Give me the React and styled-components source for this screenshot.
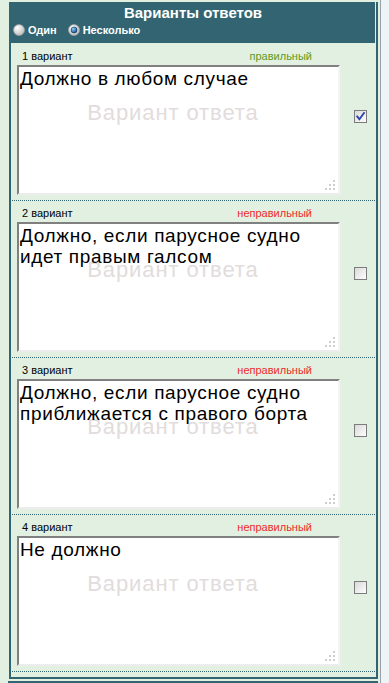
import React from "react";
import styled, { createGlobalStyle } from "styled-components";

const TEAL = "#326571";
const BG = "#e1f0e1";

const Global = createGlobalStyle`
  html, body { margin: 0; padding: 0; }
  body {
    background: #eef3f7;
    font-family: "Liberation Sans", Arial, sans-serif;
  }
`;

const Page = styled.div`
  width: 381px;
  min-height: 683px;
  box-sizing: border-box;
  background: ${BG};
  border-right: 1px solid #9aa1a8;
  padding: 2px 2px 0 9px;
  overflow: hidden;
`;

const Panel = styled.div`
  border: 2px solid ${TEAL};
  border-top: none;
  padding: 0 0 5px;
`;

const Header = styled.div`
  background: ${TEAL};
  margin: 0 1px 0 -2px;
  height: 41px;
  box-sizing: border-box;
  padding: 2px 0 0 4px;
  color: #fff;
`;

const Title = styled.div`
  font: bold 15px/18px "Liberation Sans", Arial, sans-serif;
  text-align: center;
  padding-right: 2px;
`;

const ModeRow = styled.div`
  display: flex;
  align-items: center;
  height: 16px;
`;

const Mode = styled.label`
  display: flex;
  align-items: center;
  gap: 3px;
  font: bold 11px/16px "Liberation Sans", Arial, sans-serif;
  margin-right: 11px;
`;

const Body = styled.div`
  padding-top: 1px;
`;

const Row = styled.div`
  display: flex;
  margin: 0 1px;
  padding: 6px 0 5px 5px;
  border-bottom: 1px dotted ${TEAL};
`;

const Main = styled.div`
  width: 323px;
  display: flex;
  flex-direction: column;
`;

const LabelLine = styled.div`
  display: flex;
  justify-content: space-between;
  font: 11px/13px "Liberation Sans", Arial, sans-serif;
  padding: 0 28px 0 5px;
  margin-bottom: 2px;
`;

const Status = styled.span`
  color: ${(p) => (p.$ok ? "#5f9a1c" : "#ef2b2b")};
`;

const Field = styled.div`
  position: relative;
  height: 130px;
  background: #fff;
`;

const Hint = styled.span`
  position: absolute;
  left: 0;
  right: 11px;
  top: 35px;
  text-align: center;
  font: 22px/25px "Liberation Sans", Arial, sans-serif;
  letter-spacing: 0.9px;
  color: #e2dcdc;
  pointer-events: none;
  white-space: nowrap;
`;

const Area = styled.textarea`
  position: relative;
  display: block;
  width: 100%;
  height: 100%;
  box-sizing: border-box;
  margin: 0;
  padding: 1px 1px;
  border-style: solid;
  border-width: 2px;
  border-color: #808080 #f4f4f4 #ececec #808080;
  background: transparent;
  resize: none;
  outline: none;
  overflow: hidden;
  font: 19px/21px "Liberation Sans", Arial, sans-serif;
  letter-spacing: 0.65px;
  color: #000;
`;

const Grip = styled.svg`
  position: absolute;
  right: 5px;
  bottom: 5px;
  pointer-events: none;
`;

const Side = styled.div`
  flex: 1;
  display: flex;
  align-items: center;
  justify-content: center;
  padding: 0 0 12px 5px;
`;

const NextBar = styled.div`
  margin: 2px 0 0 -1px;
  width: 370px;
  height: 10px;
  background: ${TEAL};
`;

function Radio({ checked }) {
  return (
    <svg width="12" height="12" viewBox="0 0 12 12">
      <defs>
        <radialGradient id={checked ? "rg1" : "rg0"} cx="0.35" cy="0.3" r="0.8">
          <stop offset="0" stopColor="#ffffff" />
          <stop offset="1" stopColor="#b8b8b8" />
        </radialGradient>
        <radialGradient id="dot" cx="0.35" cy="0.3" r="0.8">
          <stop offset="0" stopColor="#8fd0ff" />
          <stop offset="1" stopColor="#0a3f7a" />
        </radialGradient>
      </defs>
      <circle cx="6" cy="6" r="5.5" fill={`url(#${checked ? "rg1" : "rg0"})`} stroke="#9a9a9a" strokeWidth="0.8" />
      {checked && <circle cx="6" cy="6" r="3" fill="url(#dot)" stroke="#08335f" strokeWidth="0.6" />}
    </svg>
  );
}

function Check({ checked }) {
  return (
    <svg width="13" height="13" viewBox="0 0 13 13">
      <defs>
        <linearGradient id="cbg" x1="0" y1="0" x2="1" y2="1">
          <stop offset="0" stopColor="#d8d8d8" />
          <stop offset="1" stopColor="#ffffff" />
        </linearGradient>
      </defs>
      <rect x="0.5" y="0.5" width="12" height="12" fill="url(#cbg)" stroke="#7c7c7c" />
      {checked && (
        <path d="M3.2 6.4 L5.4 9.2 L10 3" fill="none" stroke="#2a3fa8" strokeWidth="1.8" strokeLinecap="square" />
      )}
    </svg>
  );
}

function ResizeDots() {
  const dots = [
    [8, 0],
    [4, 4],
    [8, 4],
    [0, 8],
    [4, 8],
    [8, 8],
  ];
  return (
    <Grip width="10" height="10" viewBox="0 0 10 10">
      {dots.map(([x, y], i) => (
        <rect key={i} x={x} y={y} width="2" height="2" fill="#cfcfcf" />
      ))}
    </Grip>
  );
}

const answers = [
  { text: "Должно в любом случае", ok: true },
  { text: "Должно, если парусное судно идет правым галсом", ok: false },
  { text: "Должно, если парусное судно приближается с правого борта", ok: false },
  { text: "Не должно", ok: false },
];

export default function App() {
  return (
    <>
      <Global />
      <Page>
        <Panel>
          <Header>
            <Title>Варианты ответов</Title>
            <ModeRow>
              <Mode>
                <Radio />
                Один
              </Mode>
              <Mode>
                <Radio checked />
                Несколько
              </Mode>
            </ModeRow>
          </Header>
          <Body>
            {answers.map((a, i) => (
              <Row key={i}>
                <Main>
                  <LabelLine>
                    <span>{i + 1} вариант</span>
                    <Status $ok={a.ok}>{a.ok ? "правильный" : "неправильный"}</Status>
                  </LabelLine>
                  <Field>
                    <Hint>Вариант ответа</Hint>
                    <Area defaultValue={a.text} spellCheck={false} />
                    <ResizeDots />
                  </Field>
                </Main>
                <Side>
                  <Check checked={a.ok} />
                </Side>
              </Row>
            ))}
          </Body>
        </Panel>
        <NextBar />
      </Page>
    </>
  );
}
